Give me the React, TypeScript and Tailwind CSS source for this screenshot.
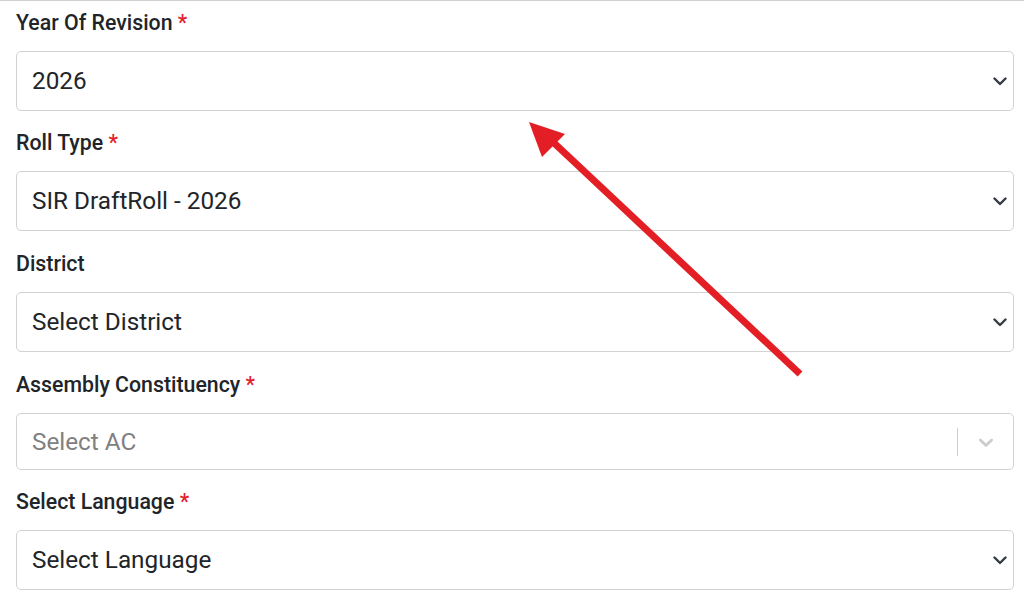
import React from "react";

const Chevron = () => (
  <svg width="14" height="9" viewBox="0 0 14 9" className="shrink-0">
    <polyline points="1.5,1.5 7,7 12.5,1.5" fill="none" stroke="#343a40" strokeWidth="2.4" strokeLinecap="round" strokeLinejoin="round" />
  </svg>
);

const Label = ({ text, req }: { text: string; req?: boolean }) => (
  <div className="text-[21.3px] leading-[24px] font-medium text-[#212529] mb-4">
    {text}
    {req && <span className="text-[#e4202a]"> *</span>}
  </div>
);

const SelectBox = ({ value }: { value: string }) => (
  <div className="h-[60px] w-full rounded-[5px] border border-[#d2d2d2] bg-white flex items-center pl-[15px] pr-[6px]">
    <span className="text-[24.3px] leading-[28px] text-[#212529]">{value}</span>
    <div className="ml-auto flex items-center">
      <Chevron />
    </div>
  </div>
);

export default function App() {
  return (
    <div className="relative w-[1024px] h-[604px] overflow-hidden bg-white border-t border-[#d0d0d0] font-['Roboto',sans-serif]">
      <div className="flex flex-col pl-4 pr-[10px] pt-[10px]">
        <Label text="Year Of Revision" req />
        <SelectBox value="2026" />

        <div className="mt-5">
          <Label text="Roll Type" req />
          <SelectBox value="SIR DraftRoll - 2026" />
        </div>

        <div className="mt-[21px]">
          <Label text="District" />
          <SelectBox value="Select District" />
        </div>

        <div className="mt-[21px]">
          <Label text="Assembly Constituency" req />
          <div className="h-[57px] w-full rounded-[5px] border border-[#d2d2d2] bg-white flex items-center pl-[15px] pr-[15px]">
            <span className="text-[24.3px] leading-[28px] text-[#808080]">Select AC</span>
            <div className="ml-auto flex items-center">
              <div className="w-px h-[28px] bg-[#cccccc]" />
              <svg width="24" height="24" viewBox="0 0 20 20" className="ml-4 shrink-0" fill="#cccccc">
                <path d="M4.516 7.548c0.436-0.446 1.043-0.481 1.576 0l3.908 3.747 3.908-3.747c0.533-0.481 1.141-0.446 1.574 0 0.436 0.445 0.408 1.197 0 1.615-0.406 0.418-4.695 4.502-4.695 4.502-0.217 0.223-0.502 0.335-0.787 0.335s-0.57-0.112-0.789-0.335c0 0-4.287-4.084-4.695-4.502s-0.436-1.17 0-1.615z" />
              </svg>
            </div>
          </div>
        </div>

        <div className="mt-5">
          <Label text="Select Language" req />
          <SelectBox value="Select Language" />
        </div>
      </div>

      <svg className="absolute left-0 top-0 pointer-events-none" width="1024" height="604" viewBox="0 0 1024 604">
        <line x1="800" y1="373" x2="553" y2="141" stroke="#e31e24" strokeWidth="7" />
        <polygon points="529,121 565,133 542,156" fill="#e31e24" />
      </svg>
    </div>
  );
}
